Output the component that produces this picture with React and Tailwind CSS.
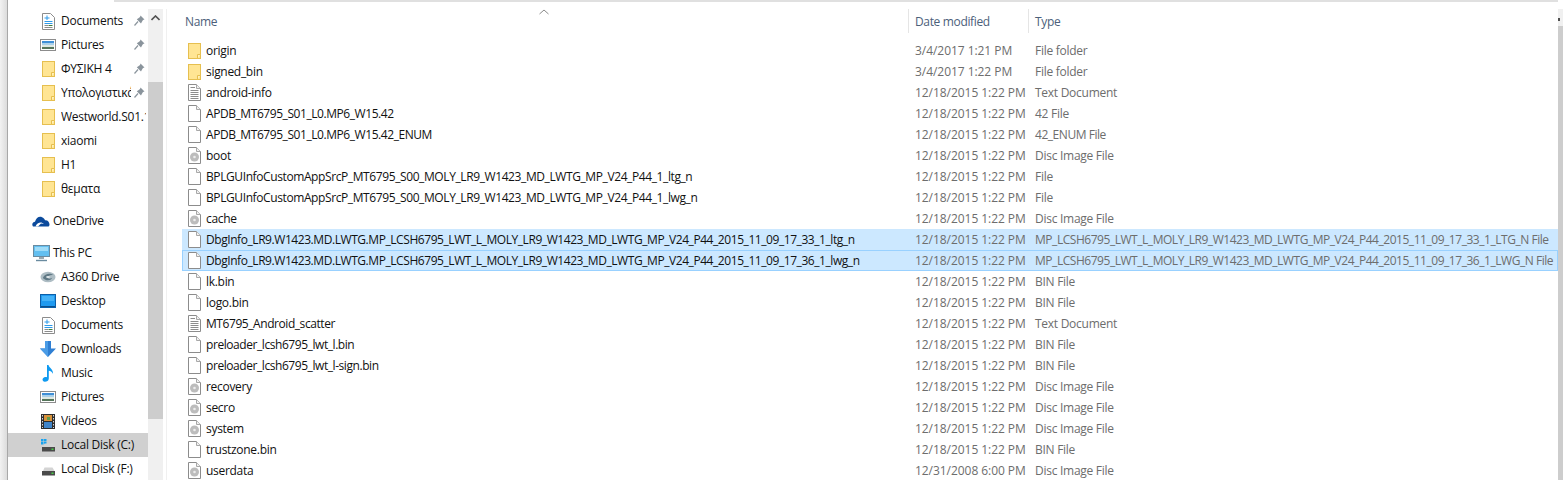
import React from 'react';

const FONT = 'font-["Open_Sans","Noto_Sans",sans-serif]';

function FolderIcon() {
    return (
        <svg width="13" height="16" viewBox="0 0 13 16" className="shrink-0">
            <rect x="0.5" y="0.5" width="12" height="15" fill="#ffe593" stroke="#e6bf4f" />
            <path d="M9.5 15.5V11.5H12.5" fill="#fff1bd" stroke="#e6bf4f" />
        </svg>
    );
}

function FileIcon({ kind }) {
    return (
        <svg width="13" height="17" viewBox="0 0 13 17" className="shrink-0">
            <path d="M0.5 0.5H8.5L12.5 4.5V16.5H0.5Z" fill="#fff" stroke="#8c8c8c" />
            <path d="M8.5 0.5V4.5H12.5" fill="#f0f0f0" stroke="#a8a8a8" />
            {kind === 'text' && (
                <path d="M2.5 3.5H7M2.5 6.5H10.5M2.5 8.5H10.5M2.5 10.5H10.5M2.5 12.5H10.5M2.5 14.5H10.5" stroke="#8c8c8c" />
            )}
            {kind === 'disc' && (
                <>
                    <circle cx="6.5" cy="10" r="4.5" fill="#bcbcbc" />
                    <circle cx="6.5" cy="10" r="1.3" fill="#ececec" />
                </>
            )}
        </svg>
    );
}

function PinIcon() {
    return (
        <svg width="11" height="11" viewBox="0 0 11 11">
            <path d="M6.5 0.5L10.5 4.5L9 5L7.5 7.5L7 8.5L2.8 4.2L4 3.5L6 2Z" fill="#8a949c" />
            <path d="M4 6.5L0.5 10.5" stroke="#8a949c" strokeWidth="1.2" />
        </svg>
    );
}

function DocsIcon() {
    return (
        <svg width="13" height="17" viewBox="0 0 13 17">
            <path d="M0.5 0.5H8.5L12.5 4.5V16.5H0.5Z" fill="#fff" stroke="#8c8c8c" />
            <path d="M5 2.5V7M2.5 5H7.5" stroke="#2e9bea" />
            <path d="M2.5 8.5H10.5M2.5 10.5H10.5" stroke="#2e9bea" />
            <path d="M2.5 12.5H6" stroke="#8c8c8c" />
            <path d="M6.5 12.5H10.5" stroke="#3c7a3c" />
            <path d="M2.5 14.5H10.5" stroke="#8c8c8c" />
        </svg>
    );
}

function PicturesIcon() {
    return (
        <svg width="16" height="12" viewBox="0 0 16 12">
            <rect x="0.5" y="0.5" width="15" height="11" fill="#fff" stroke="#8c8c8c" />
            <rect x="2" y="2" width="12" height="2" fill="#3f8fd6" />
            <rect x="2" y="4" width="12" height="2" fill="#a9d0ea" />
            <rect x="2" y="6" width="12" height="2" fill="#dfe9e2" />
            <rect x="2" y="8" width="12" height="2" fill="#55755a" />
        </svg>
    );
}

function OneDriveIcon() {
    return (
        <svg width="18" height="11" viewBox="0 0 18 11">
            <path d="M1 10.5C-0.5 8.5 0.5 6 3 5.8C4 2 7 0 10 1.2C11.5 1.8 12.5 3 13 4.2C15.5 3.8 17.5 6 17.5 8.5C17.5 9.5 17 10.2 16.5 10.5Z" fill="#0b4a9c" />
            <path d="M3.5 10.5C4.5 7.5 7 6.2 9.5 6.5L12 8L9 7.5L6 10.5Z" fill="#fff" />
        </svg>
    );
}

function PcIcon() {
    return (
        <svg width="17" height="17" viewBox="0 0 17 17">
            <rect x="0.5" y="0.5" width="16" height="11" fill="#63bff0" stroke="#6a8ba0" />
            <rect x="2" y="2" width="13" height="4" fill="#9fdcf8" />
            <rect x="6" y="12" width="5" height="2" fill="#9aa8b0" />
            <path d="M3 15.5H14" stroke="#6a8ba0" strokeWidth="1.4" />
        </svg>
    );
}

function A360Icon() {
    return (
        <svg width="17" height="14" viewBox="0 0 17 14">
            <ellipse cx="8.5" cy="7" rx="8" ry="5.5" fill="#aebdc4" />
            <path d="M3 8C5 3.5 11 2.5 14 5C11 4.5 8 6 8 8C10 9.5 12 8.5 13 7.5C12.5 10.5 7 12 3 8Z" fill="#5f7884" />
            <ellipse cx="8.5" cy="7" rx="2" ry="1" fill="#dfe6e9" />
        </svg>
    );
}

function DesktopIcon() {
    return (
        <svg width="16" height="14" viewBox="0 0 16 14">
            <rect x="0.5" y="0.5" width="15" height="13" fill="#1f9af0" stroke="#0c5fa8" />
            <rect x="2" y="2" width="12" height="5" fill="#45b2f7" />
            <rect x="1" y="12" width="14" height="1" fill="#0c4f8c" />
        </svg>
    );
}

function DownloadIcon() {
    return (
        <svg width="16" height="16" viewBox="0 0 16 16">
            <path d="M5 0H11V7.5H16L8 16L0 7.5H5Z" fill="#2f7fd3" />
            <path d="M5 0H8V16L0 7.5H5Z" fill="#4a9ce6" />
        </svg>
    );
}

function MusicIcon() {
    return (
        <svg width="12" height="17" viewBox="0 0 12 17">
            <path d="M5 0H6.5C7 3 11.5 4 11 9C10.5 7 8.5 6 6.8 5.8V13.5C6.8 15.8 4.5 17 2.5 16.8C0.5 16.5 0 14.5 1 13.3C2 12 3.8 11.6 5 12.2Z" fill="#0f9af0" />
        </svg>
    );
}

function VideoIcon() {
    return (
        <svg width="14" height="15" viewBox="0 0 14 15">
            <rect width="14" height="15" fill="#2d2d2d" />
            <rect x="3" y="1" width="8" height="6" fill="#d8923a" />
            <rect x="3" y="8" width="8" height="6" fill="#3f84c8" />
            <rect x="6" y="3" width="3" height="3" fill="#5f9c4a" />
            <path d="M1.5 1V14M12.5 1V14" stroke="#d8d8d8" strokeDasharray="1.5 1.5" />
        </svg>
    );
}

function DriveIcon({ windows }) {
    return (
        <svg width="15" height="13" viewBox="0 0 15 13">
            {windows && (
                <g fill="#19a3ef">
                    <rect x="0" y="0" width="2.5" height="2.5" />
                    <rect x="3" y="0" width="2.5" height="2.5" />
                    <rect x="0" y="3" width="2.5" height="2.5" />
                    <rect x="3" y="3" width="2.5" height="2.5" />
                </g>
            )}
            <path d="M2 8L3.5 4.5H11.5L13.5 8Z" fill="#d4d4d4" />
            <rect x="1" y="8" width="13" height="4.5" fill="#4b4b4b" />
            <rect x="10.5" y="9.5" width="2" height="1.5" fill="#46d246" />
        </svg>
    );
}

const favorites = [
    { label: 'Documents', icon: <DocsIcon />, pin: true },
    { label: 'Pictures', icon: <PicturesIcon />, pin: true },
    { label: 'ΦΥΣΙΚΗ 4', icon: <FolderIcon />, pin: true },
    { label: 'Υπολογιστικά', icon: <FolderIcon />, pin: true },
    { label: 'Westworld.S01.1080p', icon: <FolderIcon /> },
    { label: 'xiaomi', icon: <FolderIcon /> },
    { label: 'H1', icon: <FolderIcon /> },
    { label: 'θεματα', icon: <FolderIcon /> },
];

const pcItems = [
    { label: 'A360 Drive', icon: <A360Icon /> },
    { label: 'Desktop', icon: <DesktopIcon /> },
    { label: 'Documents', icon: <DocsIcon /> },
    { label: 'Downloads', icon: <DownloadIcon /> },
    { label: 'Music', icon: <MusicIcon /> },
    { label: 'Pictures', icon: <PicturesIcon /> },
    { label: 'Videos', icon: <VideoIcon /> },
    { label: 'Local Disk (C:)', icon: <DriveIcon windows />, active: true },
    { label: 'Local Disk (F:)', icon: <DriveIcon /> },
];

const D = '12/18/2015 1:22 PM';
const files = [
    { name: 'origin', date: '3/4/2017 1:21 PM', type: 'File folder', kind: 'folder' },
    { name: 'signed_bin', date: '3/4/2017 1:22 PM', type: 'File folder', kind: 'folder' },
    { name: 'android-info', date: D, type: 'Text Document', kind: 'text' },
    { name: 'APDB_MT6795_S01_L0.MP6_W15.42', date: D, type: '42 File' },
    { name: 'APDB_MT6795_S01_L0.MP6_W15.42_ENUM', date: D, type: '42_ENUM File' },
    { name: 'boot', date: D, type: 'Disc Image File', kind: 'disc' },
    { name: 'BPLGUInfoCustomAppSrcP_MT6795_S00_MOLY_LR9_W1423_MD_LWTG_MP_V24_P44_1_ltg_n', date: D, type: 'File' },
    { name: 'BPLGUInfoCustomAppSrcP_MT6795_S00_MOLY_LR9_W1423_MD_LWTG_MP_V24_P44_1_lwg_n', date: D, type: 'File' },
    { name: 'cache', date: D, type: 'Disc Image File', kind: 'disc' },
    {
        name: 'DbgInfo_LR9.W1423.MD.LWTG.MP_LCSH6795_LWT_L_MOLY_LR9_W1423_MD_LWTG_MP_V24_P44_2015_11_09_17_33_1_ltg_n',
        date: D,
        type: 'MP_LCSH6795_LWT_L_MOLY_LR9_W1423_MD_LWTG_MP_V24_P44_2015_11_09_17_33_1_LTG_N File',
        selected: true,
    },
    {
        name: 'DbgInfo_LR9.W1423.MD.LWTG.MP_LCSH6795_LWT_L_MOLY_LR9_W1423_MD_LWTG_MP_V24_P44_2015_11_09_17_36_1_lwg_n',
        date: D,
        type: 'MP_LCSH6795_LWT_L_MOLY_LR9_W1423_MD_LWTG_MP_V24_P44_2015_11_09_17_36_1_LWG_N File',
        selected: true,
        focused: true,
    },
    { name: 'lk.bin', date: D, type: 'BIN File' },
    { name: 'logo.bin', date: D, type: 'BIN File' },
    { name: 'MT6795_Android_scatter', date: D, type: 'Text Document', kind: 'text' },
    { name: 'preloader_lcsh6795_lwt_l.bin', date: D, type: 'BIN File' },
    { name: 'preloader_lcsh6795_lwt_l-sign.bin', date: D, type: 'BIN File' },
    { name: 'recovery', date: D, type: 'Disc Image File', kind: 'disc' },
    { name: 'secro', date: D, type: 'Disc Image File', kind: 'disc' },
    { name: 'system', date: D, type: 'Disc Image File', kind: 'disc' },
    { name: 'trustzone.bin', date: D, type: 'BIN File' },
    { name: 'userdata', date: '12/31/2008 6:00 PM', type: 'Disc Image File', kind: 'disc' },
];

// upper-case heavy strings run wider in Open Sans than in the original font
const isCaps = (s) => /[A-Z0-9_]{4}/.test(s);

function nameTracking(name) {
    if (name.startsWith('BPLG')) return 'tracking-[-0.4px]';
    return isCaps(name) ? 'tracking-[-0.435px]' : 'tracking-[-0.3px]';
}

function NavItem({ item }) {
    return (
        <div className={`h-6 shrink-0 flex items-center relative tracking-[-0.25px] ${item.active ? 'bg-[#d0d0d0]' : ''}`}>
            <span className="w-[21px] ml-[32px] h-[17px] shrink-0 flex items-center">
                <span className="w-[16px] flex justify-center">{item.icon}</span>
            </span>
            <span className={`overflow-hidden whitespace-nowrap ${item.pin ? 'w-[70px]' : 'w-[85px]'}`}>{item.label}</span>
            {item.pin && (
                <span className="absolute left-[126px] top-[6px]">
                    <PinIcon />
                </span>
            )}
        </div>
    );
}

function Sidebar() {
    return (
        <div className="w-[140px] shrink-0 flex flex-col text-[12px] text-[#111]">
            {favorites.map((item, i) => (
                <NavItem key={i} item={item} />
            ))}
            <div className="h-6 shrink-0 mt-2 flex items-center pl-[24px] gap-[3px] tracking-[-0.25px]">
                <span className="w-[18px] flex justify-center"><OneDriveIcon /></span>
                <span>OneDrive</span>
            </div>
            <div className="h-6 shrink-0 mt-2 flex items-center pl-[24px] gap-[3px] tracking-[-0.25px]">
                <span className="w-[18px] flex justify-center"><PcIcon /></span>
                <span>This PC</span>
            </div>
            {pcItems.map((item, i) => (
                <NavItem key={i} item={item} />
            ))}
        </div>
    );
}

function FileRow({ file }) {
    const bg = file.focused
        ? 'bg-[#cce8ff] border border-[#99d1ff]'
        : file.selected
          ? 'bg-[#cce8ff] border border-transparent'
          : 'border border-transparent';
    return (
        <div className={`h-[21px] shrink-0 flex items-center whitespace-nowrap pl-[5px] ${bg}`}>
            <span className="w-[18px] shrink-0 flex">
                {file.kind === 'folder' ? <FolderIcon /> : <FileIcon kind={file.kind} />}
            </span>
            <span className={`w-[709px] shrink-0 text-[#111] ${nameTracking(file.name)}`}>{file.name}</span>
            <span className="w-[120px] shrink-0 text-[#6d6d6d] tracking-[-0.05px]">{file.date}</span>
            <span className={`text-[#6d6d6d] ${isCaps(file.type) ? 'tracking-[-0.46px]' : 'tracking-[-0.27px]'}`}>{file.type}</span>
        </div>
    );
}

function FileList() {
    return (
        <div className="flex-1 min-w-0 relative border-l border-[#f0f0f0] ml-[3px] text-[12px]">
            {/* sort caret */}
            <svg width="10" height="6" viewBox="0 0 10 6" className="absolute left-[372px] top-0">
                <path d="M0.5 5L5 1L9.5 5" fill="none" stroke="#8a8a8a" />
            </svg>
            <div className="h-6 flex text-[#4c607a] pl-[18px] tracking-[-0.35px]">
                <span className="w-[723px] shrink-0 pt-[1px] flex items-center">Name</span>
                <span className="w-[120px] shrink-0 border-l border-[#e5e5e5] pl-[6px] pt-[1px] flex items-center">Date modified</span>
                <span className="border-l border-[#e5e5e5] pl-[6px] pt-[1px] flex items-center">Type</span>
            </div>
            <div className="flex flex-col pt-[7px] pl-[15px]">
                {files.map((file, i) => (
                    <FileRow key={i} file={file} />
                ))}
            </div>
        </div>
    );
}

export default function App() {
    return (
        <div className={`w-[1563px] h-[480px] overflow-hidden flex bg-white ${FONT}`}>
            <div className="w-[7px] shrink-0 bg-gradient-to-r from-[#f2f2f2] to-[#dcdcdc] border-r border-[#a8a8a8] box-content" />
            <div className="flex-1 min-w-0 flex flex-col">
                <div className="h-[9px] shrink-0 pl-[106px] pr-[5px]">
                    <div className="h-[2px] border-b-2 border-[#e0e0e0]" />
                </div>
                <div className="flex-1 min-h-0 flex">
                    <Sidebar />
                    <div className="w-[15px] shrink-0 flex flex-col bg-[#f0f0f0]">
                        <div className="h-[73px] shrink-0 flex justify-center pt-[6px]">
                            <svg width="9" height="6" viewBox="0 0 9 6">
                                <path d="M0.5 5L4.5 1L8.5 5" fill="none" stroke="#505050" strokeWidth="1.6" />
                            </svg>
                        </div>
                        <div className="h-[337px] shrink-0 bg-[#cdcdcd]" />
                    </div>
                    <FileList />
                    <div className="w-[5px] shrink-0 flex flex-col bg-[#f0f0f0]">
                        <div className="h-[17px] shrink-0 pt-[9px]">
                            <div className="w-[2px] h-[3px] bg-[#505050]" />
                        </div>
                        <div className="flex-1 bg-[#cdcdcd]" />
                    </div>
                </div>
            </div>
        </div>
    );
}
